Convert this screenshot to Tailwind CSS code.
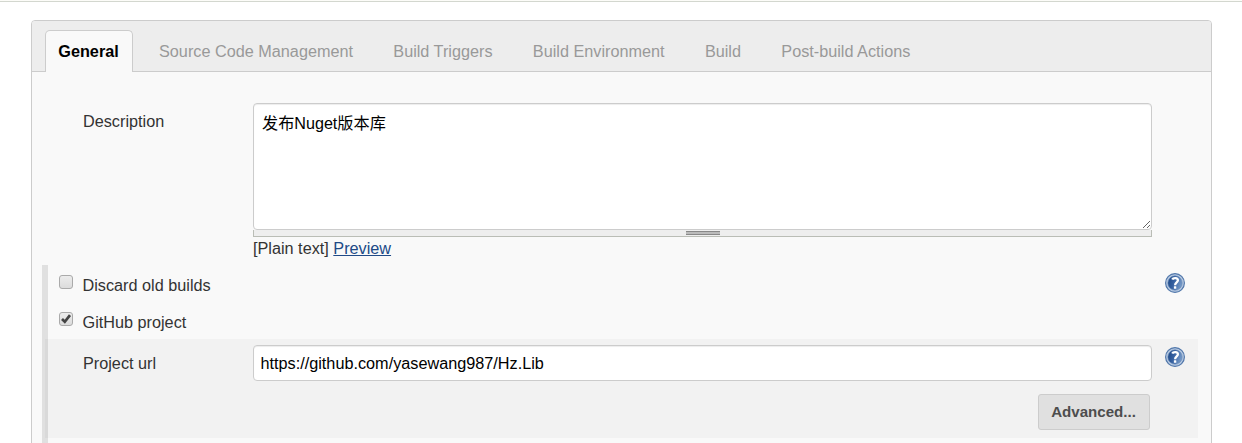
<!DOCTYPE html>
<html lang="en">
<head>
<meta charset="utf-8">
<title>Project configuration</title>
<script src="https://cdn.jsdelivr.net/npm/@tailwindcss/browser@4"></script>
</head>
<body class="h-[443px] overflow-hidden bg-white font-['Liberation_Sans','Noto_Sans_CJK_SC',sans-serif] text-[16.24px] text-[#333]">
<svg class="absolute size-0" aria-hidden="true">
  <defs>
    <linearGradient id="ball" x1="0" y1="0.3" x2="1" y2="0.6"><stop offset="0" stop-color="#204a87"/><stop offset="0.4" stop-color="#3560a0"/><stop offset="1" stop-color="#7a9ecb"/></linearGradient>
    <symbol id="help" viewBox="0 0 20 20">
      <circle cx="10" cy="10" r="9.4" fill="#b8cae2" stroke="#5278ab" stroke-width="1.2"/>
      <circle cx="10" cy="10" r="7.2" fill="url(#ball)" stroke="#6386b6" stroke-width=".6"/>
      <path d="M7.2 6.6C8.2 4.6 12.9 4.5 12.9 7.3C12.9 9.4 10.1 9.3 10.1 12.2" fill="none" stroke="#fff" stroke-width="2.3"/>
      <rect x="8.9" y="13.3" width="2.4" height="2.4" rx=".5" fill="#fff"/>
    </symbol>
  </defs>
</svg>
<div class="h-0.5 border-b border-[#d3d7cf] bg-[#fcfcf8]"></div>
<main class="mt-[18px] ml-[31px] h-[440px] w-[1181px] rounded-t border border-[#ccc] bg-[#f9f9f9]">
  <nav class="flex h-[51px] items-end rounded-t-[3px] border-b border-[#ccc] bg-[#ededed] pl-[13px] leading-[18px] text-[#999]">
    <a class="-mb-px h-[42px] w-[88px] rounded-t-[5px] border border-b-0 border-[#ccc] bg-[#f9f9f9] pt-[11px] pl-[12.3px] font-bold text-black">General</a>
    <a class="ml-[26px] h-[38px] w-[194px] pt-[9px] whitespace-nowrap">Source Code Management</a>
    <a class="ml-[40.3px] h-[38px] pt-[9px] whitespace-nowrap">Build Triggers</a>
    <a class="ml-[40.3px] h-[38px] pt-[9px] whitespace-nowrap">Build Environment</a>
    <a class="ml-[40.3px] h-[38px] pt-[9px] whitespace-nowrap">Build</a>
    <a class="ml-[40.3px] h-[38px] pt-[9px] whitespace-nowrap">Post-build Actions</a>
  </nav>
  <section class="flex h-[193px] pt-[31px] pl-[51px]">
    <label class="w-[170px] pt-[9px] leading-[18px]">Description</label>
    <div class="w-[899px]">
      <textarea class="block h-[127px] w-full resize rounded border border-[#ccc] bg-white px-2 py-[10px] text-[16.15px] leading-[18px] text-black shadow-[inset_0_1px_1px_rgba(0,0,0,0.075)]">发布Nuget版本库</textarea>
      <div class="flex h-[7px] justify-center border border-t-0 border-[#babdb6] bg-[#eee] pt-px">
        <div class="h-1 w-[34px] border-y border-[#888] bg-[#bbb]"></div>
      </div>
      <p class="mt-0.5 leading-[18px]">[Plain text] <a class="text-[#204a87] underline">Preview</a></p>
    </div>
  </section>
  <section class="ml-[10px] h-[178px] w-[1156px] bg-[linear-gradient(to_right,#e0e0e0_6px,transparent_6px)]">
    <div class="flex h-[37px] pl-[17px]">
      <span class="mt-[10px] size-[14px] shrink-0 rounded-[3px] border border-[#aaa] bg-linear-to-b from-[#ececec] to-[#dcdcdc]"></span>
      <label class="mt-[11px] ml-[9.5px] flex-1 leading-[18px]">Discard old builds</label>
      <svg class="mt-2 mr-[13px] size-5"><use href="#help"/></svg>
    </div>
    <div class="flex h-[37px] pl-[17px]">
      <span class="mt-[10px] size-[14px] shrink-0 rounded-[3px] border border-[#aaa] bg-linear-to-b from-[#ececec] to-[#dcdcdc]">
        <svg class="block size-3" viewBox="0 0 12 12"><path d="M2 6L4.8 8.8L10 2.2" fill="none" stroke="#444" stroke-width="2.7"/></svg>
      </span>
      <label class="mt-[11px] ml-[9.5px] leading-[18px]">GitHub project</label>
    </div>
    <div class="ml-[3px] h-[99px] bg-black/[0.027] pt-1.5 pl-[38px]">
      <div class="flex">
        <label class="w-[170px] pt-[9px] leading-[18px]">Project url</label>
        <input class="h-9 w-[899px] rounded border border-[#ccc] bg-white px-[6.5px] pt-px text-black shadow-[inset_0_1px_1px_rgba(0,0,0,0.075)]" value="https://github.com/yasewang987/Hz.Lib">
        <svg class="mt-0.5 ml-[13px] size-5"><use href="#help"/></svg>
      </div>
      <div class="mt-[13px] flex justify-end pr-12">
        <button class="h-9 w-[112px] rounded-[3px] border border-[#ccc] bg-[#e0e0e0] pr-px text-[15.1px] font-bold text-[#4d4d4d]">Advanced...</button>
      </div>
    </div>
  </section>
</main>
</body>
</html>
